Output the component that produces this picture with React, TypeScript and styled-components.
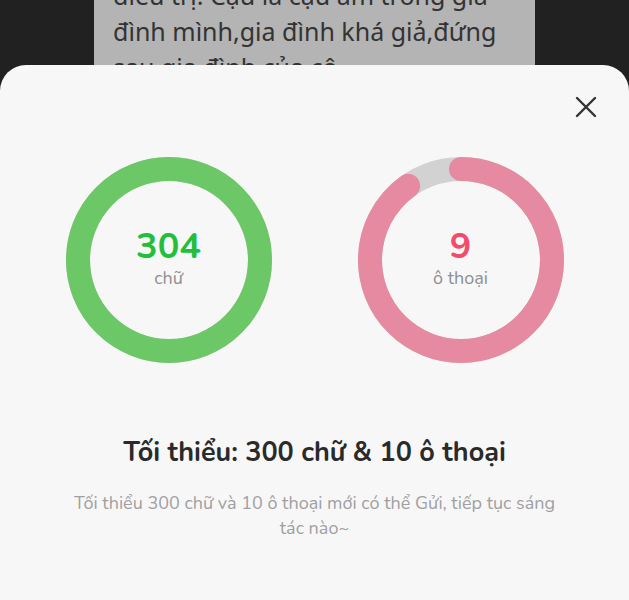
import React from 'react';
import styled, { createGlobalStyle } from 'styled-components';

const GlobalStyle = createGlobalStyle`
  html, body {
    margin: 0;
    padding: 0;
    background: #212121;
  }
  * {
    box-sizing: border-box;
  }
`;

type RingProps = {
  value: number;
  total: number;
  color: string;
  numberColor: string;
  label: string;
  display: string;
};

const SIZE = 206;
const STROKE = 24;
const R = (SIZE - STROKE) / 2;
const CIRC = 2 * Math.PI * R;

function Ring({ value, total, color, numberColor, label, display }: RingProps) {
  const ratio = Math.min(value / total, 1);
  return (
    <RingBox>
      <svg width={SIZE} height={SIZE} viewBox={`0 0 ${SIZE} ${SIZE}`}>
        <circle cx={SIZE / 2} cy={SIZE / 2} r={R} fill="none" stroke="#d2d2d2" strokeWidth={STROKE} />
        <circle
          cx={SIZE / 2}
          cy={SIZE / 2}
          r={R}
          fill="none"
          stroke={color}
          strokeWidth={STROKE}
          strokeLinecap={ratio >= 1 ? 'butt' : 'round'}
          strokeDasharray={`${CIRC * ratio} ${CIRC}`}
          transform={`rotate(-90 ${SIZE / 2} ${SIZE / 2})`}
        />
      </svg>
      <RingCenter>
        <Count $color={numberColor}>{display}</Count>
        <Unit>{label}</Unit>
      </RingCenter>
    </RingBox>
  );
}

function App() {
  return (
    <>
      <GlobalStyle />
      <Page>
        <StoryCard>
          điều trị. Cậu là cậu ấm trong gia đình mình,gia đình khá giả,đứng sau gia đình của cô
        </StoryCard>
        <Sheet>
          <SheetHeader>
            <CloseButton aria-label="Đóng">
              <svg width="22" height="22" viewBox="0 0 22 22">
                <path d="M2 2 L20 20 M20 2 L2 20" stroke="#333" strokeWidth="2.4" strokeLinecap="round" />
              </svg>
            </CloseButton>
          </SheetHeader>
          <Rings>
            <Ring value={304} total={300} color="#6cc866" numberColor="#22bf3b" display="304" label="chữ" />
            <Ring value={9} total={10} color="#e58aa1" numberColor="#f24b6b" display="9" label="ô thoại" />
          </Rings>
          <Title>Tối thiểu: 300 chữ &amp; 10 ô thoại</Title>
          <Hint>Tối thiểu 300 chữ và 10 ô thoại mới có thể Gửi, tiếp tục sáng tác nào~</Hint>
        </Sheet>
      </Page>
    </>
  );
}

export default App;

const Page = styled.div`
  position: relative;
  width: 629px;
  height: 600px;
  overflow: hidden;
  background: #212121;
  padding-left: 94px;
`;

const StoryCard = styled.div`
  width: 441px;
  margin-top: -23px;
  padding: 0 19px;
  height: 200px;
  background: #b4b4b4;
  color: #333;
  font-family: 'Noto Sans', 'Open Sans', sans-serif;
  font-size: 25px;
  line-height: 36px;
`;

const Sheet = styled.div`
  position: absolute;
  top: 65px;
  left: 0;
  right: 0;
  bottom: 0;
  background: #f7f7f7;
  border-radius: 26px 26px 0 0;
  display: flex;
  flex-direction: column;
  align-items: center;
  font-family: 'Nunito', 'Lato', 'Noto Sans', sans-serif;
`;

const SheetHeader = styled.div`
  width: 100%;
  display: flex;
  justify-content: flex-end;
  padding: 31px 32px 0 0;
`;

const CloseButton = styled.button`
  width: 22px;
  height: 22px;
  padding: 0;
  border: none;
  background: transparent;
  cursor: pointer;
  display: flex;
`;

const Rings = styled.div`
  display: flex;
  gap: 86px;
  margin-top: 39px;
`;

const RingBox = styled.div`
  position: relative;
  width: ${SIZE}px;
  height: ${SIZE}px;
  svg {
    display: block;
  }
`;

const RingCenter = styled.div`
  position: absolute;
  inset: 0;
  display: flex;
  flex-direction: column;
  align-items: center;
  justify-content: center;
  padding-bottom: 3px;
`;

const Count = styled.div<{ $color: string }>`
  color: ${(p) => p.$color};
  font-size: 36px;
  font-weight: 700;
  line-height: 38px;
`;

const Unit = styled.div`
  color: #8f8f8f;
  font-size: 18px;
  line-height: 24px;
`;

const Title = styled.h2`
  margin: 72px 0 0;
  color: #2a2a2a;
  font-size: 27px;
  font-weight: 700;
  line-height: 36px;
`;

const Hint = styled.p`
  margin: 20px 0 0;
  width: 500px;
  text-align: center;
  color: #a0a0a0;
  font-size: 18px;
  line-height: 25px;
`;
